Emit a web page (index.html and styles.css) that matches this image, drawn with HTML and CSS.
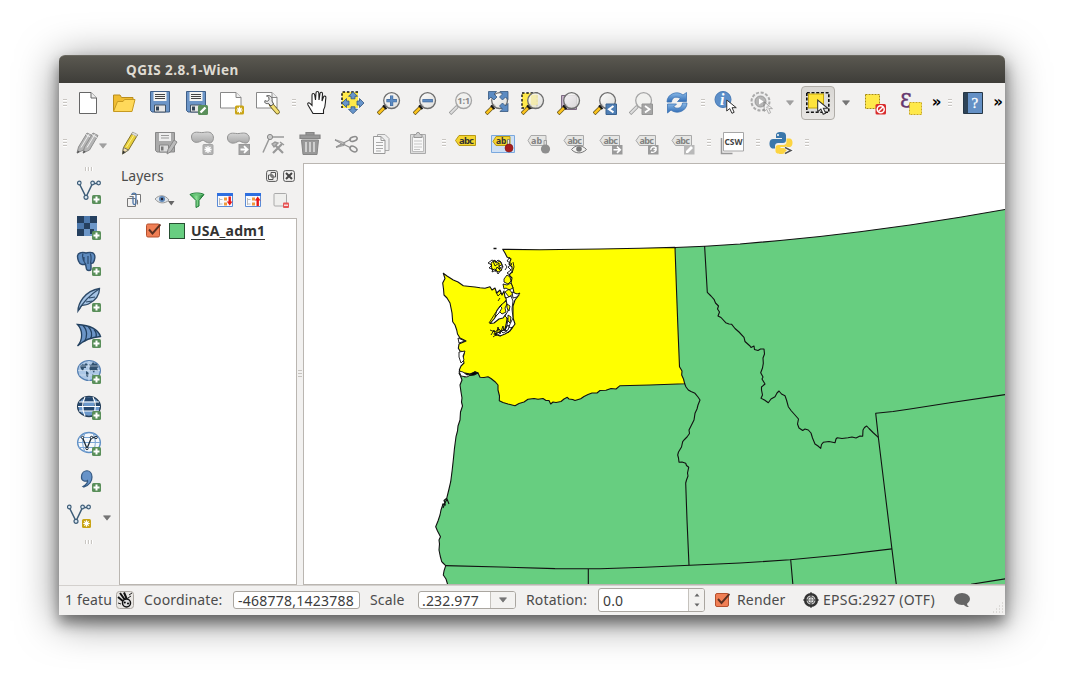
FILE: index.html
```html
<!DOCTYPE html>
<html lang="en">
<head>
<meta charset="utf-8">
<title>QGIS 2.8.1-Wien</title>
<link rel="stylesheet" href="styles.css">
</head>
<body>
<svg class="defs" width="0" height="0">
<defs>
<linearGradient id="gl" x1="0" y1="0" x2="1" y2="1"><stop offset="0" stop-color="#fff"/><stop offset="1" stop-color="#d9d9d6"/></linearGradient>
<linearGradient id="gg" x1="0" y1="0" x2="0" y2="1"><stop offset="0" stop-color="#d5d5d5"/><stop offset="1" stop-color="#a8a8a8"/></linearGradient>
<linearGradient id="gr" x1="0" y1="0" x2="0" y2="1"><stop offset="0" stop-color="#8cbbe8"/><stop offset="1" stop-color="#2f6bb5"/></linearGradient>
<linearGradient id="fn" x1="0" y1="0" x2="1" y2="0"><stop offset="0" stop-color="#1f9a3a"/><stop offset=".45" stop-color="#8be095"/><stop offset="1" stop-color="#14702a"/></linearGradient>
<symbol id="plus" viewBox="0 0 24 24"><rect x="15" y="15" width="9" height="9" rx="1.5" fill="#5a8f5a"/><path d="M19.5 16.500v6M16.500 19.500h6" stroke="#fff" stroke-width="2"/></symbol>
<symbol id="star" viewBox="0 0 24 24"><rect x="15" y="14.500" width="9" height="9" rx="1.500" fill="#c9a415"/><path d="M19.500 15.800v6.400M16.300 19h6.400M17.300 16.800l4.400 4.400M21.700 16.800l-4.400 4.400" stroke="#fff" stroke-width="1.200"/></symbol>
<symbol id="mag" viewBox="0 0 24 24"><path d="M1 22.800L8 15.800" stroke="#6b5a20" stroke-width="4"/><path d="M1.500 22.300L7 16.800" stroke="#fcc31c" stroke-width="2.500"/><path d="M6 14.500l3.500 3.500" stroke="#111" stroke-width="2"/><path d="M7.500 16L10 13.500" stroke="#222" stroke-width="2.600"/><circle cx="14.600" cy="9.600" r="7.900" fill="url(#gl)" fill-opacity=".85" stroke="#6d6d6d" stroke-width="1.300"/></symbol>
<symbol id="magg" viewBox="0 0 24 24"><path d="M1 22.800L8.500 15.300" stroke="#999" stroke-width="3.600"/><path d="M1.500 22.300L8 15.800" stroke="#ddd" stroke-width="2"/><circle cx="14.600" cy="9.600" r="7.900" fill="#f1f1ef" stroke="#a5a5a5" stroke-width="1.300"/></symbol>
<symbol id="cur" viewBox="0 0 12 16"><path d="M1 1v11l3-2.500 2.200 4.800 2.200-1L6.300 8.700H10.500z" fill="#fff" stroke="#333" stroke-width="1"/></symbol>
<symbol id="v" viewBox="0 0 24 24"><path d="M2.500 4L9 17 15.500 3.500H22" fill="none" stroke="#3e5d78" stroke-width="1.500"/><g fill="#dce8f2" stroke="#3e5d78" stroke-width="1.200"><circle cx="2.300" cy="3" r="1.800"/><circle cx="9" cy="17.300" r="2"/><circle cx="15.600" cy="3" r="1.800"/><circle cx="21.600" cy="3" r="1.800"/></g></symbol>
<symbol id="tag" viewBox="0 0 24 24"><path d="M1 9.500l3.500-5H20.500v10H4.500z" fill="#e6e6e4" stroke="#a9a9a9"/><text x="4.500" y="12.800" font-family="Noto Sans" font-size="9" font-weight="bold" fill="#828282" textLength="14.500">abc</text></symbol>
<symbol id="pg" viewBox="0 0 24 24"><path d="M4 22l1.500-6L14 2l5 2.500L10.500 19z" fill="#b5b5b5" stroke="#8f8f8f"/><path d="M4 22.500l.8-3 2 1.200z" fill="#555"/><path d="M8 16.500L16 3.200M13 3.500l5 3" stroke="#eee"/></symbol>
<symbol id="dn" viewBox="0 0 8 6"><path d="M.5 .8h7L4 5.200z" fill="#777" stroke="#666" stroke-width=".6"/></symbol>
</defs>
</svg>
<main class="window">
<header class="titlebar">QGIS 2.8.1-Wien</header>

<nav class="toolbar">
<i class="grip"></i>
<svg class="ic" viewBox="0 0 24 24"><path d="M3.500 1.500H15l5.500 5.500v15.500H3.500z" fill="#fff" stroke="#666"/><path d="M15 1.500V7h5.500" fill="#eee" stroke="#666"/></svg>
<svg class="ic" viewBox="0 0 24 24"><path d="M1.500 20V4H8l1.500 2.500H21V11" fill="#f0bd32" stroke="#b98d1c"/><path d="M1.500 20.500L5.500 10.500H11l1.500-2h10.500L20 20.500z" fill="#ffd95a" stroke="#c79a20"/></svg>
<svg class="ic" viewBox="0 0 24 24"><path d="M2.500.5h19v20.500H4l-1.500-1.500z" fill="#6c95c7" stroke="#3f5f88"/><path d="M5.500 1h13v9h-13z" fill="#f4f4f2"/><path d="M7 3.500h10M7 5.500h10M7 7.500h10" stroke="#444"/><path d="M6.500 14h11v7h-11z" fill="#e6e6e6" stroke="#456"/><path d="M8 15.500h3v4H8z" fill="#345"/></svg>
<svg class="ic" viewBox="0 0 24 24"><path d="M2.500.5h19v20.500H4l-1.500-1.500z" fill="#6c95c7" stroke="#3f5f88"/><path d="M5.500 1h13v9h-13z" fill="#f4f4f2"/><path d="M7 3.500h10M7 5.500h10M7 7.500h10" stroke="#444"/><path d="M6.500 14h11v7h-11z" fill="#e6e6e6" stroke="#456"/><path d="M8 15.500h3v4H8z" fill="#345"/><rect x="14" y="14" width="10" height="10" rx="1.500" fill="#5a8f5a"/><path d="M16.500 21.500l5-5" stroke="#fff" stroke-width="2.400"/></svg>
<svg class="ic" viewBox="0 0 24 24"><path d="M.5 1.500H16l5 5v10.500H.5z" fill="#fff" stroke="#888"/><path d="M16 1.500v5h5" fill="#eee" stroke="#888"/><use href="#star"/></svg>
<svg class="ic" viewBox="0 0 24 24"><path d="M.5 1.500H16l5 5v10.500H.5z" fill="#fff" stroke="#888"/><path d="M16 1.500v5h5" fill="#eee" stroke="#888"/><path d="M15 13.500l6.500 7.500" stroke="#665a20" stroke-width="4.600" stroke-linecap="round"/><path d="M15.500 14l6 7" stroke="#f3df73" stroke-width="3" stroke-linecap="round"/><path d="M9 9.500c2 1.500 4 .5 4-1.500S12 5 10.500 5c3-1.500 6.500 1 5.500 5l1.500 3-2.500 2-2.500-2.500C10 13 8 12 9 9.500z" fill="#e8e8e8" stroke="#444" stroke-width=".9"/></svg>
<i class="grip g2"></i>
<svg class="ic" viewBox="0 0 24 24"><path d="M8 22.500L3 14c-1-2 .8-3 2-1.500l2 2V4c0-2 2.500-2 2.700 0L10.500 9 11 2c0-2 2.700-2 2.800 0L14 9l1-6.500c.3-1.800 2.500-1.500 2.500.3L17 10l1.500-4c.6-1.600 2.600-1 2.400.7C20 12 21 15 18.500 19v3.500z" fill="#fff" stroke="#222" stroke-width="1.100"/></svg>
<svg class="ic" viewBox="0 0 24 24"><rect x="1" y="1" width="16" height="16" fill="#ffe94a"/><path d="M17 1H1v16" fill="none" stroke="#111" stroke-width="1.500" stroke-dasharray="2.500 1.800"/><path d="M12 .8l4.500 4.500H14v2.500h-4V5.300H7.500zM12 22.800l4.500-4.500H14v-2.500h-4v2.500H7.500zM1 12l4.500-4.500V10H8v4H5.500v2.500zM23 12l-4.500-4.500V10H16v4h2.500v2.500z" fill="#6795cb" stroke="#33567f" stroke-width=".8"/></svg>
<svg class="ic" viewBox="0 0 24 24"><use href="#mag"/><path d="M14.600 4.500v10.500M9.400 9.700h10.500" stroke="#42699a" stroke-width="3.200"/><path d="M14.600 5v9.500M9.900 9.700h9.500" stroke="#5d8cc4" stroke-width="2"/></svg>
<svg class="ic" viewBox="0 0 24 24"><use href="#mag"/><path d="M9.400 9.700h10.500" stroke="#42699a" stroke-width="3.200"/><path d="M9.900 9.700h9.500" stroke="#5d8cc4" stroke-width="1.800"/></svg>
<svg class="ic" viewBox="0 0 24 24"><use href="#magg"/><text x="8.300" y="13" font-family="Noto Sans" font-size="9.500" font-weight="bold" fill="#8b8b8b" textLength="13">1:1</text></svg>
<svg class="ic" viewBox="0 0 24 24"><use href="#mag"/><path d="M3.500.5h8L9 3l3 3-3 3-3-3-2.500 2.500zM23 .5v8L20.500 6l-3 3-3-3 3-3L15 .5zM23 20.500h-8l2.500-2.500-3-3 3-3 3 3 2.500-2.500z" fill="#5c8bc2" stroke="#35577f" stroke-width=".8"/></svg>
<svg class="ic" viewBox="0 0 24 24"><rect x="1" y="2" width="15" height="15" fill="#ffe94a" stroke="#111" stroke-width="1.400" stroke-dasharray="2.500 1.800"/><use href="#mag"/><path d="M10 4h7v10h-7z" fill="#f4eaa0" opacity=".7"/></svg>
<svg class="ic" viewBox="0 0 24 24"><path d="M4.500 4.500h15v14h-15z" fill="#c3b1c8" stroke="#7d6a82"/><use href="#mag"/></svg>
<svg class="ic" viewBox="0 0 24 24"><use href="#mag"/><path d="M13 13h10.500v10.500H13z" fill="#4f7fb5" stroke="#3a628f"/><path d="M20.500 15L16 18.200l4.500 3.200" fill="none" stroke="#fff" stroke-width="2"/></svg>
<svg class="ic" viewBox="0 0 24 24"><use href="#magg"/><path d="M13 13h10.500v10.500H13z" fill="#a6a6a6" stroke="#949494"/><path d="M16 15l4.500 3.200-4.500 3.200" fill="none" stroke="#fff" stroke-width="1.800"/></svg>
<svg class="ic" viewBox="0 0 24 24"><path d="M2 11C2 3 12-1 18 4l3.500-2.500v9h-9l3-3C11 5 7 6 6.500 11z" fill="url(#gr)" stroke="#3d74b4" stroke-width=".8"/><path d="M22 12c0 8-10 12-16 7l-3.500 3v-9h9l-3 3c4.500 2.500 8.500 1 9-4z" fill="url(#gr)" stroke="#3d74b4" stroke-width=".8"/></svg>
<i class="grip g2"></i>
<svg class="ic" viewBox="0 0 24 24"><circle cx="9" cy="8.500" r="8" fill="#5c8fc9" stroke="#4679b5"/><text x="6" y="14" font-family="Liberation Serif" font-style="italic" font-weight="bold" font-size="16" fill="#fff">i</text><use href="#cur" x="11.500" y="8" width="12.500" height="16"/></svg>
<svg class="ic" viewBox="0 0 24 24"><circle cx="10.500" cy="10.500" r="9" fill="#eee" stroke="#aaa" stroke-width="2" stroke-dasharray="3 1.700"/><circle cx="10.500" cy="10.500" r="5.500" fill="#b5b5b5" stroke="#999"/><path d="M9 7.500v6l4.500-3z" fill="#fff"/><use href="#cur" x="13" y="10" width="11" height="14" opacity=".4"/></svg>
<svg class="arr a1 dim" viewBox="0 0 8 6"><use href="#dn"/></svg>
<span class="pressed"><svg class="ic" viewBox="0 0 24 24"><rect x=".8" y="1.800" width="22" height="19.500" fill="#ddd" stroke="#111" stroke-width="1.600" stroke-dasharray="3 1.700"/><rect x="2.500" y="3" width="15" height="14" fill="#fee33c" stroke="#c6a70d"/><use href="#cur" x="10" y="8" width="14" height="17"/></svg></span>
<svg class="arr a2" viewBox="0 0 8 6"><use href="#dn"/></svg>
<svg class="ic" viewBox="0 0 24 24"><rect x="2.500" y="3.500" width="14" height="14" fill="#ffe94a" stroke="#a88c10" stroke-dasharray="2 1"/><rect x="12.500" y="13" width="10.500" height="10.500" rx="1.500" fill="#d92c2c"/><circle cx="17.700" cy="18.200" r="3.500" fill="none" stroke="#fff" stroke-width="1.500"/><path d="M15.500 20.500l4.500-4.500" stroke="#fff" stroke-width="1.500"/></svg>
<svg class="ic" viewBox="0 0 24 24"><text x="1" y="15.500" font-family="DejaVu Serif" font-size="26" fill="#66386e" stroke="#66386e" stroke-width=".4" textLength="12" lengthAdjust="spacingAndGlyphs">ε</text><rect x="10.500" y="11.500" width="12" height="12" fill="#ffe94a" stroke="#c9a820" stroke-dasharray="2 1"/></svg>
<span class="more">»</span>
<i class="grip g3"></i>
<svg class="ic" viewBox="0 0 24 24"><path d="M2.500 1.500h19v21h-19z" fill="#6490c5" stroke="#263746"/><path d="M3 2h4v20H3z" fill="#2d4358"/><text x="10.500" y="17" font-family="Liberation Serif" font-size="15" fill="#fff" stroke="#fff" stroke-width=".3">?</text></svg>
<span class="more m2">»</span>
</nav>

<nav class="toolbar">
<i class="grip"></i>
<svg class="ic c26" viewBox="0 0 24 24"><use href="#pg" x="-3"/><use href="#pg" x="3"/></svg>
<svg class="arr a3 dim" viewBox="0 0 8 6"><use href="#dn"/></svg>
<svg class="ic" viewBox="0 0 24 24"><path d="M4.500 23l1-6.500L14.500 1.500l5 2.500L10.500 19z" fill="#e8cf3b" stroke="#82712a"/><path d="M13.500 3l1.200-2 5 2.500-1.300 2z" fill="#ddd" stroke="#999" stroke-width=".6"/><path d="M5.500 16.500l5 2.500-6 4z" fill="#f2dcae" stroke="#776"/><path d="M4.500 23.300l.6-3.500 2.400 1.300z" fill="#333"/><path d="M8.500 16L16 4" stroke="#fff18a"/></svg>
<svg class="ic" viewBox="0 0 24 24"><path d="M1.500 1.500h19V21H3l-1.500-1.500z" fill="#aaa" stroke="#888"/><path d="M5 2h12v8H5z" fill="#eee"/><path d="M7 4.500h8M7 7h8" stroke="#999"/><path d="M5.500 14h9v7h-9z" fill="#ddd" stroke="#888"/><path d="M7 15.500h2.500v4H7z" fill="#777"/><path d="M13 23l1-4.500 6-9.500 3 2-6 9.500z" fill="#bbb" stroke="#888"/></svg>
<svg class="ic" viewBox="0 0 24 24"><path d="M1.500 5C3-1 9 2 13 1.500s8-1.500 10 3c1.500 4-1 8-4 7.500-5-1-5-4-8-2-4 2.500-10 2-9.500-5z" fill="url(#gg)" stroke="#949494"/><rect x="13" y="13.500" width="10" height="10" rx="1" fill="#b4b4b4" stroke="#a5a5a5"/><path d="M18 15v7M14.500 18.500h7M15.500 16l5 5M20.500 16l-5 5" stroke="#fff" stroke-width="1.300"/></svg>
<svg class="ic" viewBox="0 0 24 24"><path d="M1.500 6C3 0 9 3 13 2.500s8-1.500 10 3c1 4-1 7-4 6.500-5-1-5-3-8-1-4 2.500-10 1-9.500-5z" fill="url(#gg)" stroke="#949494"/><rect x="13" y="13.500" width="10.500" height="10" fill="#a4a4a4" stroke="#999"/><path d="M14.500 18.500H21M18 15.200l3.500 3.300-3.500 3.300" fill="none" stroke="#fff" stroke-width="1.800"/></svg>
<svg class="ic" viewBox="0 0 24 24"><path d="M1 21.500L8 6h14" fill="none" stroke="#9a9a9a" stroke-width="1.500"/><circle cx="8" cy="6" r="2.600" fill="#ccc" stroke="#888"/><path d="M11 22l9-9M21 22l-9-9" stroke="#999" stroke-width="2.200"/><path d="M10 13l3-2 3 1-4 4zM18 11l4 3" stroke="#999" fill="#bbb" stroke-width="1.400"/></svg>
<svg class="ic" viewBox="0 0 24 24"><path d="M3.500 9h17l-1.500 14.500H5z" fill="#999" stroke="#858585"/><path d="M2 4h20v3.500H2zM8 4V1.500h8V4" fill="#999" stroke="#858585" stroke-width="1.200"/><path d="M8 11v10M12 11v10M16 11v10" stroke="#ddd" stroke-width="1.600"/></svg>
<svg class="ic" viewBox="0 0 24 24"><path d="M1 9l16 8M2 16l15-8" stroke="#919191" stroke-width="1.300"/><path d="M1 8.500l9 3v3zM2 16.500l8-2 1-2z" fill="#bbb" stroke="#909090" stroke-width=".7"/><ellipse cx="19.500" cy="8" rx="3.800" ry="2.200" fill="none" stroke="#8c8c8c" stroke-width="1.500" transform="rotate(-20 19.500 8)"/><ellipse cx="19.500" cy="18" rx="3.800" ry="2.400" fill="none" stroke="#8c8c8c" stroke-width="1.500" transform="rotate(30 19.500 18)"/></svg>
<svg class="ic" viewBox="0 0 24 24"><path d="M7.500 3.500H15l4 4v12H7.500z" fill="#eee" stroke="#aaa"/><path d="M3.500 5.500H11l4 4v13H3.500z" fill="#f8f8f8" stroke="#999"/><path d="M11 5.500v4h4" fill="none" stroke="#999"/><path d="M6 11.500h7M6 14.500h7M6 17.500h7M6 20h5" stroke="#aaa"/></svg>
<svg class="ic" viewBox="0 0 24 24"><path d="M4.500 3.500h15v19h-15z" fill="#ddd" stroke="#aaa"/><path d="M6.500 6h11v14.500h-11z" fill="#f8f8f8" stroke="#bbb"/><path d="M8 3.500h2L11 1.500h2l1 2h2v3H8z" fill="#ccc" stroke="#999"/><path d="M8 10h8M8 13h8M8 16h8M8 18.500h6" stroke="#c5c5c5"/></svg>
<i class="grip g2"></i>
<svg class="ic" viewBox="0 0 24 24"><path d="M.5 9.500l3.500-5H20.500v10H4z" fill="#f4d52f" stroke="#b89914"/><text x="4" y="13" font-family="Noto Sans" font-size="9.500" font-weight="bold" fill="#333" textLength="15">abc</text></svg>
<svg class="ic" viewBox="0 0 24 24"><path d="M.5 4.500h23V21.500H.5z" fill="#cfe0f4" stroke="#7aa8de"/><path d="M2 10.500l3-5H19v9H5z" fill="#f4d52f" stroke="#b89914"/><text x="5" y="13" font-family="Noto Sans" font-size="8.500" font-weight="bold" fill="#333">ab</text><path d="M16.500 14V8.500h2V14" fill="#eee" stroke="#666" stroke-width=".7"/><circle cx="18" cy="17" r="4" fill="#a71d1d" stroke="#801414" stroke-width=".6"/></svg>
<svg class="ic" viewBox="0 0 24 24"><path d="M1 9.500l3-5H19v10H4z" fill="#e6e6e4" stroke="#a9a9a9"/><text x="4" y="12.800" font-family="Noto Sans" font-size="9" font-weight="bold" fill="#828282">ab</text><path d="M17 15V9.500h2.500V15" fill="#ddd" stroke="#888" stroke-width=".7"/><circle cx="18.500" cy="18" r="4.600" fill="#8e8e8e"/></svg>
<svg class="ic" viewBox="0 0 24 24"><use href="#tag"/><path d="M8.500 18.500c4-5 10.500-5 15 0-4.500 4.500-11 4.500-15 0z" fill="#f2f2f0" stroke="#777"/><circle cx="16" cy="18" r="2.800" fill="#777"/></svg>
<svg class="ic" viewBox="0 0 24 24"><use href="#tag"/><path d="M13 14h10.500v9.500H13z" fill="#9b9b9b"/><path d="M14.500 18.800H21M18 15.700l3.300 3.100-3.300 3.100" fill="none" stroke="#fff" stroke-width="1.600"/></svg>
<svg class="ic" viewBox="0 0 24 24"><use href="#tag"/><path d="M13 14h10.500v9.500H13z" fill="#9b9b9b"/><path d="M16 19c-1-3 4-4.500 5-1.500s-3 4.500-5 3.500M18.500 18.500h2.500V16" fill="none" stroke="#fff" stroke-width="1.400"/></svg>
<svg class="ic" viewBox="0 0 24 24"><use href="#tag"/><path d="M13 14h10.500v9.500H13z" fill="#b9b9b9"/><path d="M15 20v2h2l5-5-2-2z" fill="#fff"/></svg>
<i class="grip g4"></i>
<svg class="ic" viewBox="0 0 24 24"><path d="M.5 7v15.500h11" fill="none" stroke="#999" stroke-width="1.500"/><path d="M2.500 1.500h20v18.500h-20z" fill="#fff" stroke="#a7a7a7"/><text x="3.500" y="13.500" font-family="Noto Sans" font-size="9.500" font-weight="bold" fill="#444" textLength="18" lengthAdjust="spacingAndGlyphs">CSW</text></svg>
<i class="grip g6"></i>
<svg class="ic" viewBox="0 0 24 24"><path d="M12 1c-4 0-5 1.500-5 3.500V7h6v1H4C1 8 .5 11 .5 13S1.500 17.500 4 17.500h2V15c0-2 1.500-3 3-3h5c2 0 3-1 3-3V4.500C17 2 15 1 12 1z" fill="#3a77ab"/><path d="M17.500 7.500V11c0 2-1.500 3-3 3h-5c-2 0-3 1.300-3 3v3c0 2.200 2.500 3 5.500 3s5.500-1 5.500-3.500V17h-6v-1h9c2.500 0 3-2.500 3-4.500s-1-4-3-4z" fill="#fcd441"/><circle cx="9" cy="4" r="1" fill="#fff"/><path d="M16 16.500l6 3-6 3" fill="none" stroke="#fff" stroke-width="3"/><path d="M16 16.500l6 3-6 3" fill="none" stroke="#555" stroke-width="1.500"/></svg>
<i class="grip g5"></i>
</nav>

<section class="work">
<nav class="side">
<i class="vgrip"></i>
<svg class="ic" viewBox="0 0 24 24"><use href="#v"/><use href="#plus"/></svg>
<svg class="ic" viewBox="0 0 24 24"><path d="M0 0h20v20H0z" fill="#6d97c8"/><path d="M0 0h7v7H0zM13 0h7v7h-7zM7 7h6v6H7zM0 13h7v7H0zM13 13h4v5h-4z" fill="#25405f"/><path d="M7 0h6v7H7zM0 7h7v6H0z" fill="#4d79ad"/><use href="#plus"/></svg>
<svg class="ic" viewBox="0 0 24 24"><path d="M3 1c3-1.500 5 0 6 0s4-1.500 7 0c3 2 2 7 0 10l-2 .5V17c0 2-4 2-4.500 0l-1-5C6 13 3 13 1.500 9S0 2 3 1z" fill="#5f8cc0" stroke="#2c4b6f" stroke-width="1.400"/><path d="M6 1.500c-1 3 0 7 2.500 10.500M13 1.500c2 3 1 6 .5 10M7 5v5M11 4v8" fill="none" stroke="#2c4b6f" stroke-width="1.200"/><use href="#plus"/></svg>
<svg class="ic" viewBox="0 0 24 24"><path d="M1 23c0-5 2-9 5-13C10 5 16 1.500 22.500.5c0 6-4 12-11 15.500-3 1.500-5 1-7 1.500z" fill="#a6c4e5" stroke="#2d4a68" stroke-width="1.300"/><path d="M2 22C6 14 13 7 22 1M9 14l6-1M12 10l6-1" fill="none" stroke="#2d4a68" stroke-width="1.100"/><use href="#plus"/></svg>
<svg class="ic" viewBox="0 0 24 24"><path d="M.5.500c8 .500 20 3 23 12C15 13 7 16 .5 22 6 16 6 6 .5.500z" fill="#6c95c7" stroke="#22405f" stroke-width="1.300"/><path d="M6 1.500c5 5 4 12 1.500 16M11.500 3c4 4 3.500 8.500 2 12M17 5.500c3 3 2.500 5 2 7.500" fill="none" stroke="#22405f" stroke-width="1.300"/><use href="#plus"/></svg>
<svg class="ic" viewBox="0 0 24 24"><ellipse cx="12" cy="10.500" rx="11.400" ry="10" fill="#adc8e6" stroke="#557fb1" stroke-width="1.200"/><path d="M3 6l3-2 1 1 2-2 2 2-2 1 0 2-2 0-1 3-2-2zM12 4l2 1 2-3 2 2 1-1 3 4-2 1 1 3-3-1-1 3-2-3-2 1-1-3 1-1zM9 11l3 2-1 4-2-1zM15 14l2 1-1 3z" fill="#31516f"/><path d="M1 10.500h22M12 1v20M2 6h20M2 15h20" stroke="#dbe7f4" stroke-width=".6"/><use href="#plus"/></svg>
<svg class="ic" viewBox="0 0 24 24"><ellipse cx="12" cy="10.500" rx="11.400" ry="10" fill="#6c98cb" stroke="#263f59" stroke-width="1.300"/><path d="M8 1.500h8l1 4H7zM1.500 6H7v4.500H.8zM17 6h5.500l.7 4.500H17zM7 10.500h10V15H7z" fill="#24466c"/><path d="M2 6h20M1 10.500h22M2 15h20M8 1C5 7 5 14 8 20M16 1c3 6 3 13 0 19" fill="none" stroke="#fff" stroke-width="1.100"/><use href="#plus"/></svg>
<svg class="ic" viewBox="0 0 24 24"><ellipse cx="12" cy="10.500" rx="11.400" ry="10" fill="#f5f8fb" stroke="#6090c5" stroke-width="1.300"/><path d="M2 5.500h20M1 10.500h22M2 15.500h20M8 1C5 7 5 14 8 20M16 1c3 6 3 13 0 19" fill="none" stroke="#7ca7d7" stroke-width="1.100"/><path d="M5.500 5.500L10 16.500 14.500 5.500H19" fill="none" stroke="#1c2c3b" stroke-width="1.300"/><g fill="#fff" stroke="#1c2c3b"><circle cx="5.500" cy="5.500" r="1.200"/><circle cx="10" cy="16.500" r="1.200"/><circle cx="14.500" cy="5.500" r="1.200"/><circle cx="19" cy="5.500" r="1.200"/></g><use href="#plus"/></svg>
<svg class="ic" viewBox="0 0 24 24"><path d="M6 18.500c4-2 5-5 4.500-6-2 1.500-6.500.5-6-4C5 1 15 .5 15 9c0 5-4 8.500-8 10z" fill="#6793c8" stroke="#345880" stroke-width="1.200"/><use href="#plus"/></svg>
<span class="last"><svg class="ic" viewBox="0 0 24 24"><use href="#v"/><use href="#star" y=".5"/></svg><svg class="arr" viewBox="0 0 8 6"><use href="#dn"/></svg></span>
<i class="vgrip vb"></i>
</nav>

<aside class="layers">
<div class="head"><span>Layers</span>
<svg width="12" height="12" viewBox="0 0 12 12"><rect x=".6" y=".6" width="10.800" height="10.800" rx="2" fill="none" stroke="#555"/><path d="M5 2.500h4.500V7H5zM2.500 5H7v4.500H2.500z" fill="#f2f1f0" stroke="#555"/></svg>
<svg width="12" height="12" viewBox="0 0 12 12"><rect x=".6" y=".6" width="10.800" height="10.800" rx="2" fill="none" stroke="#555"/><path d="M3 3l6 6M9 3L3 9" stroke="#444" stroke-width="2"/></svg></div>
<div class="ltools">
<svg class="l1" viewBox="0 0 16 16"><path d="M1.500 6.500h8v8h-8zM3.500 4.500h8v8" fill="none" stroke="#777"/><path d="M5.500 2.500h9v8" fill="#fff" stroke="#777"/><path d="M7 5v6c0 2 3 2 3 0V3c0-2.500-4-2.500-4 0" fill="none" stroke="#4d76a8" stroke-width="1.300"/></svg>
<svg class="l2" viewBox="0 0 22 16"><path d="M1 7c4-4.500 10-4.500 14 1-4 4-10 4-14-1z" fill="#dce3ea" stroke="#999"/><circle cx="8" cy="7" r="3" fill="#5e87b8"/><circle cx="8" cy="7" r="1.200" fill="#223"/><path d="M14 9h6.500l-3.200 4.500z" fill="#666"/></svg>
<svg class="l3" viewBox="0 0 16 16"><path d="M1 2.500c3-2 11-2 14 0L10 8.500V14l-3 1.500v-7z" fill="url(#fn)" stroke="#1d7a35"/><ellipse cx="8" cy="2.500" rx="6" ry="1.200" fill="#6cc57b"/></svg>
<svg class="l3" viewBox="0 0 16 16"><path d="M.5 1.500h15v13H.5z" fill="#f8fbff" stroke="#5b8bd6"/><path d="M0 1h16v3H0z" fill="#2e6fe0"/><path d="M2.500 6v7M2.500 7.500h3M2.500 12h3" stroke="#bbb"/><path d="M7 5.500h3v3H7zM7 10.500h3v3H7z" fill="#ef9a3c"/><path d="M12.700 4.500v6" stroke="#e81818" stroke-width="2.400"/><path d="M9.800 9.500h5.800l-2.900 4z" fill="#e81818"/></svg>
<svg class="l3" viewBox="0 0 16 16"><path d="M.5 1.500h15v13H.5z" fill="#f8fbff" stroke="#5b8bd6"/><path d="M0 1h16v3H0z" fill="#2e6fe0"/><path d="M2.500 6v7M2.500 7.500h3M2.500 12h3" stroke="#bbb"/><path d="M7 5.500h3v3H7zM7 10.500h3v3H7z" fill="#ef9a3c"/><path d="M12.700 8v6" stroke="#e81818" stroke-width="2.400"/><path d="M9.800 8.500h5.800l-2.900-4z" fill="#e81818"/></svg>
<svg class="l3" viewBox="0 0 16 16"><rect x="1" y="1.500" width="12.500" height="12.500" rx="1" fill="#efefed" stroke="#aaa"/><rect x="10" y="10.500" width="6" height="5.500" rx="1" fill="#e65555"/><path d="M11 13.200h4" stroke="#fff" stroke-width="1.200"/></svg>
</div>
<div class="tree"><div class="node">
<svg width="16" height="16" viewBox="0 0 16 16"><rect x="1.500" y="1" width="13" height="13" rx="1.500" fill="#f07f55" stroke="#b5512f"/><path d="M4 6.500l3.500 4L15.500 1.500" fill="none" stroke="#5a3021" stroke-width="1.900"/></svg>
<i class="swatch"></i><b>USA_adm1</b></div></div>
</aside>
<i class="split"></i>

<svg class="map" viewBox="304 164 701 420">
<g stroke="#111" stroke-width="1.100" stroke-linejoin="round">
<path fill="#67ce80" d="M675 247.500L705 246.200 740 244 780 240.500 820 236.500 860 231.800 910 225 960 217.300 1006 209.300V590H449L447.500 584 446 579 443.300 575 444 571 445.700 565.700 443 563 441.700 561.700 440.200 556 439 550 439.500 544 439 540 440.500 536.700 437.500 531 435.700 526.700 438 521 440 515 441 510 442.700 505 445 503 444 500.500 446.700 498.300 449 489 450.700 481.700 452.200 470 453.300 460 454.500 448 456 436.700 457.500 431 458 426 460 420 460.500 412 462.500 406 461.500 402 462 398 461 392 460 385 462 380 460.500 376 459 373 475 371 640 380z"/>
<path fill="#ff0" d="M502.700 249.300L540 249.800 600 249 640 248.300 675 247.400 676.500 290 678 330 679.500 366.700 682 371 681.700 375 683.500 379 684.700 383.700 650 385 620 385.700 616 389 611 388.500 606 390.300 600 390.500 597 393 592 393 588 394.500 584 396.500 580.700 398.700 575 400.500 572.700 399.500 569 399 567.300 397.300 564 399 561 401.500 556 402.500 553 402 550.700 404 549 400.500 546 400.500 543 398.500 538 399.300 534 398.500 528 399.300 524 402 519 403.500 515 405.700 508 404 503 402.500 499.300 400.700 499.500 396 498 390 498 385 495 381.700 491 378.500 488 376.700 484 377.500 480 377.300 478 373 475 371.700 471 374.500 467 374.500 465 377 461 374 459.300 370 461 366 464 363 463 358 464.500 352 460 351 458.300 348.300 459 344 466 341 460 338 457.500 334 456.700 330 455 325 452.700 321.700 452 313 450 303 447 298 444 295 443.500 289 442.700 283 445 278.500 443.300 273.300 447 276 453.300 280 458 282 463.300 285.700 470 286.500 475 287 480 287.800 485 288.300 490 286.700 492 290 495 288 496.700 293 500 290 502 295 504 291 505 297 507 299 504 303 500 307 498 313 494 319 490 323.500 494 323 499 319 503 318 506 314 507 319 506 325 505 329 500 332 494 334 500 336 505 334 510 331 515 324 513 318 513 306 515 300 519 295 514 293 513 288 511 283 512 278 509 275 512 272 512 267 509 264 511 259 507 257 505 253z"/>
<g stroke-width=".9">
<path fill="#ff0" d="M491 263l4-3 1 3 4-2 2 4-3 1 3 4-4 2-3-3-3 1zM504 279l3-4 3 2 1 4-3 3-4-2zM503 284l4 1 4-2 2 5-4 2-3-2-2 1zM505 292l4-3 4 5-4 3zM501 305l5-4 1 3-2 4 1 4-4 2-3-3z"/>
<path fill="#fff" d="M506 298l5-2 2 5-1 8 1 9-3 6-2 6-3 1 2-6 1-6-3-3 3-5-1-6z"/>
<path fill="#ff0" d="M507 304l3 2-1 5-2-3zM508 315l3 2-1 6-2-2z"/>
<path fill="#fff" d="M497 310l3-4 2 2-3 5-4 4zM512 292l5 2 3-1-3 4-4 1z"/>
<path fill="none" d="M488 263l4 2-3 3 4 1-1 3 4-2 2 4 3-4 2-3-2-5-3-2-2 2-4-2zM493 261l2 5 4-3 0 6 4-3M495 272l2-5 3 3M510 257l-3 4 5 3-4 3 3 3-4 3 3 2M513 262l1 5-2 6M505 264l2 3-2 3"/>
<path fill="none" d="M491 335l3-5 2 6 2-9 2 7 3-8 1 5 4-6 2 3 3-1-5 6M490 330l5 2 4-3 4 4 4-2M493 337l4-3 4 2M489 323l7-11 6-8M498 301l2-3M496 292l2 4 3-3"/>
<path fill="none" d="M493.500 248.500h3" stroke-width="1.500"/>
</g>
<path d="M460 374l5-1 5 1 5-2 3 1-4 2-8 1z"/>
<g stroke-width=".9" fill="#fff"><path d="M458 338l7 3-6 2zM459 352l6-1-2 5 1 4-3 3-2-6zM459 371l4 1 4 3 5-1-5 3-6-1z"/></g>
<g fill="none">
<path d="M684.700 383.700L686 387 688.300 390 691 391.500 695 393.300 698 397 700 400 698 405 697 409 695 413.300 694 420 691 426 689 430 689.500 433.500 687 437 684 440 682.700 441.700 681.500 447 678.500 452 677.700 455 678.500 458 679 462.300 682 462 685.700 463.300 686.500 465.500 688.700 467.300 687.500 473 688 476 686.500 480 685.700 483 687 520 689 565.300"/>
<path d="M704.600 246L707.300 292.300 711 296 714 299.300 715.500 303 718.500 306 717.500 309 719.500 312 718 316 721 317.500 725.700 322.700 729 324 731.700 324.300 735 328.500 739 332 744 337.300 745 341.500 750 346 751 347.500 754 346 754.500 349.500 758 350.500 760.500 349 764 349 764.500 354 763 358 763.300 363.300 762.500 368 760.700 372.700 763 377 762 379 765 384 761.500 387 761.500 390 762.500 395 761 398.300 764.500 400 768.300 402.700 771 399 775 396.700 777 393 779 391 781.500 394 785 395.700 786.500 400 788.300 406.700 791 410.500 795 415 798.500 419 797.500 424 799 428 802.700 430.500 805 429 808.300 430 811 433 812.500 438 815 444 818 446 820.700 448.300 821.500 444.500 823.300 442.300 829 441.500 835 442.800 836 439 837.300 437.700 842 438.500 848 437.800 852 437 856 438 860 436 862.700 436.300 863 430 864.500 427.500 866.700 426 869 428.500 873 432.500 878.300 437.300"/>
<path d="M1006 394.500L950 402.800 910 409 893 411.500 875.700 413.300 878.300 437 885 492 892 549.500 896.500 586"/>
<path d="M445.700 565.600L500 567 555 568.600 600 568.700 645 567.300 690 565.300 740 563 790 559.800 840 555 892 548.900M588.300 568.700V585M790.700 559.800L793 586M971 584.300L1006 578.700"/>
<path d="M443 508l2-5 2-4 2 5M442 504l4 1"/>
</g></g></svg>
</section>

<footer class="status">
<span class="s1">1 featu</span>
<svg class="mouse" viewBox="0 0 18 18"><rect x=".5" y=".5" width="17" height="17" rx="3" fill="#e8e6e3" stroke="#aaa6a0"/><path d="M4 2l5 7M8 1.500l3 7M2 6l6 5" stroke="#111" stroke-width="2"/><circle cx="10.500" cy="12" r="4" fill="#ddd" stroke="#111" stroke-width="1.500"/><circle cx="8.800" cy="11.500" r="1"/><circle cx="12" cy="12.500" r="1"/><path d="M2 12l3 1M13 4l3-2M12 7l3-2" stroke="#222"/></svg>
<span class="s2">Coordinate:</span>
<span class="field f1">-468778,1423788</span>
<span class="s3">Scale</span>
<span class="field f2"><em>.232.977</em><u><svg viewBox="0 0 8 6"><use href="#dn"/></svg></u></span>
<span class="s4">Rotation:</span>
<span class="field f3"><em>0.0</em><u><svg viewBox="0 0 6 4"><path d="M.5 3.500h5L3 .5z" fill="#666"/></svg><svg viewBox="0 0 6 4"><path d="M.5.500h5L3 3.500z" fill="#666"/></svg></u></span>
<svg class="chk" viewBox="0 0 16 16"><rect x="1.500" y="1.500" width="13" height="13" rx="1.500" fill="#f07f55" stroke="#b5512f"/><path d="M4 7l3.500 4L15.500 2" fill="none" stroke="#5a3021" stroke-width="1.900"/></svg>
<span class="s5">Render</span>
<svg class="crs" viewBox="0 0 16 16"><circle cx="8" cy="8" r="5.800" fill="#ddd" stroke="#333" stroke-width="2.600"/><path d="M8 0v16M0 8h16" stroke="#333" stroke-width="1.100"/><circle cx="8" cy="8" r="3.200" fill="#eee" stroke="#333" stroke-width=".8"/><path d="M8 4v8M4 8h8" stroke="#666" stroke-width=".8"/></svg>
<span class="s6">EPSG:2927 (OTF)</span>
<svg class="bub" viewBox="0 0 16 16"><ellipse cx="8" cy="7" rx="8" ry="6" fill="#666"/><path d="M9 12c2 2.500 4 3 6 3-2-1-2-3-2-5z" fill="#666"/></svg>
<svg class="size" viewBox="0 0 12 12"><path d="M1 11h11M4 8h8M7 5h5M10 2h2" stroke="#c5c2be" stroke-dasharray="1 2"/></svg>
</footer>
</main>
</body>
</html>
```
FILE: styles.css
```css
* { box-sizing: border-box; }
body { margin: 0; width: 1067px; height: 685px; overflow: hidden; background: #fff; padding: 55px 0 0 59px; font: 14px "Noto Sans", sans-serif; color: #4c4c4c; }
svg { display: block; flex: none; }
.window { width: 946px; height: 560px; display: flex; flex-direction: column; background: #f2f1f0; border-radius: 6px 6px 0 0; box-shadow: 0 8px 14px rgba(0,0,0,.42), 0 6px 40px rgba(0,0,0,.5); }
.titlebar { height: 28px; flex: none; border-radius: 6px 6px 0 0; background: linear-gradient(#5a5850, #3e3d39); border-top: 1px solid #6a6860; color: #dfdbd2; font-weight: bold; font-size: 13.500px; letter-spacing: .48px; line-height: 28px; padding-left: 67px; }
.toolbar { height: 40px; flex: none; display: flex; align-items: center; }
.ic { width: 24px; height: 24px; margin: 0 6px; overflow: visible; }
.c26 { margin: 0 0 0 6px; }
.grip { flex: none; width: 4px; height: 8px; margin: 0 3px 0 4px; background: repeating-linear-gradient(#c9c6c2 0 1px, #fff 1px 2px, transparent 2px 3px); }
.g2 { margin: 0 4px 0 6px; }
.g2 + .ic { margin-left: 5px; }
.g3 { margin: 0 3px 0 4px; }
.g4 { margin: 0 4px 0 6px; }
.g5 { margin-left: 6px; }
.g6 { margin: 0 3px 0 5px; }
.arr { width: 8px; height: 6px; }
.dim { opacity: .65; }
.a1 { margin: 0 7px 0 6px; }
.a2 { margin: 0 7px 0 7px; }
.a3 { margin: 6px 4px 0 -1px; }
.a3 + .ic { margin-left: 7px; }
.pressed { width: 34px; height: 34px; flex: none; display: flex; align-items: center; justify-content: center; border: 1px solid #b0ada8; border-radius: 4px; background: linear-gradient(#d9d7d4, #e8e6e4); }
.more { flex: none; width: 15px; text-align: center; color: #000; font: bold 15px/17px "DejaVu Sans", sans-serif; margin-top: -1px; }
.m2 { width: 14px; }
.work { flex: 1; min-height: 0; display: flex; }
.side { width: 60px; display: flex; flex-direction: column; align-items: center; gap: 12px; padding-top: 4px; }
.side .ic { flex: none; margin: 0; }
.vgrip { flex: none; width: 8px; height: 4px; margin-bottom: -3px; background: repeating-linear-gradient(90deg, #c9c6c2 0 1px, #fff 1px 2px, transparent 2px 3px); }
.vb { margin: 0; }
.last { width: 60px; display: flex; align-items: center; gap: 12px; padding-left: 8px; }
.last .arr { margin-top: 3px; }
.layers { width: 178px; display: flex; flex-direction: column; }
.head { height: 25px; display: flex; align-items: center; gap: 5px; padding: 0 2px; }
.head span { flex: 1; }
.ltools { height: 30px; display: flex; align-items: center; padding: 0 0 6px 7px; }
.l1, .l3 { width: 16px; height: 16px; }
.l2 { width: 22px; height: 16px; margin: 0 13px 0 12px; }
.l3 + .l3 { margin-left: 12px; }
.tree { flex: 1; background: #fff; border: 1px solid #bab6b1; padding-top: 3px; }
.node { display: flex; align-items: center; height: 18px; padding-left: 25px; color: #333; }
.swatch { width: 16px; height: 16px; margin: 0 6px 0 8px; background: #67ce80; border: 1px solid #274f31; }
.node b { line-height: 17px; border-bottom: 1px solid #333; letter-spacing: .2px; }
.split { width: 6px; height: 8px; margin-top: 207px; background: linear-gradient(#c6c3bf 1px, transparent 1px 3px, #c6c3bf 3px 4px, transparent 4px 6px, #c6c3bf 6px 7px, transparent 7px) no-repeat 1px 0 / 4px 8px; }
.map { width: 702px; height: 422px; background: #fff; border: 1px solid #bab6b1; border-right: 0; }
.status { height: 30px; flex: none; display: flex; align-items: center; padding: 0 0 1px 6px; border-top: 1px solid #d3d0cd; white-space: nowrap; letter-spacing: .16px; }
.status > span:not(.field) { flex: none; margin-top: -2px; }
.s1 { width: 51px; }
.mouse { width: 18px; height: 18px; }
.s2 { width: 89px; margin-left: 10px; }
.field { flex: none; display: flex; background: #fff; border: 1px solid #aaa6a0; border-radius: 3px; height: 18px; line-height: 17px; overflow: hidden; color: #3c3c3c; }
.field em { flex: 1; font-style: normal; }
.field u { border-left: 1px solid #c5c2bd; background: #f3f2f0; display: flex; flex-direction: column; align-items: center; justify-content: center; }
.f1 { width: 127px; padding-left: 4px; letter-spacing: .25px; }
.s3 { width: 48px; margin-left: 10px; }
.f2 { width: 98px; padding-left: 3px; }
.f2 u { width: 25px; }
.f2 u svg { width: 8px; height: 6px; }
.s4 { width: 72px; margin-left: 10px; }
.f3 { width: 107px; height: 24px; line-height: 23px; padding-left: 4px; }
.f3 u { width: 16px; gap: 6px; }
.f3 u svg { width: 6px; height: 4px; }
.chk { width: 16px; height: 16px; margin: 0 6px 0 9px; }
.s5 { width: 66px; margin-left: 1px; }
.crs { width: 16px; height: 16px; margin-right: 4px; }
.s6 { width: 131px; letter-spacing: .28px; }
.bub { width: 16px; height: 16px; }
.size { width: 12px; height: 12px; margin: 14px 0 0 22px; }
```
